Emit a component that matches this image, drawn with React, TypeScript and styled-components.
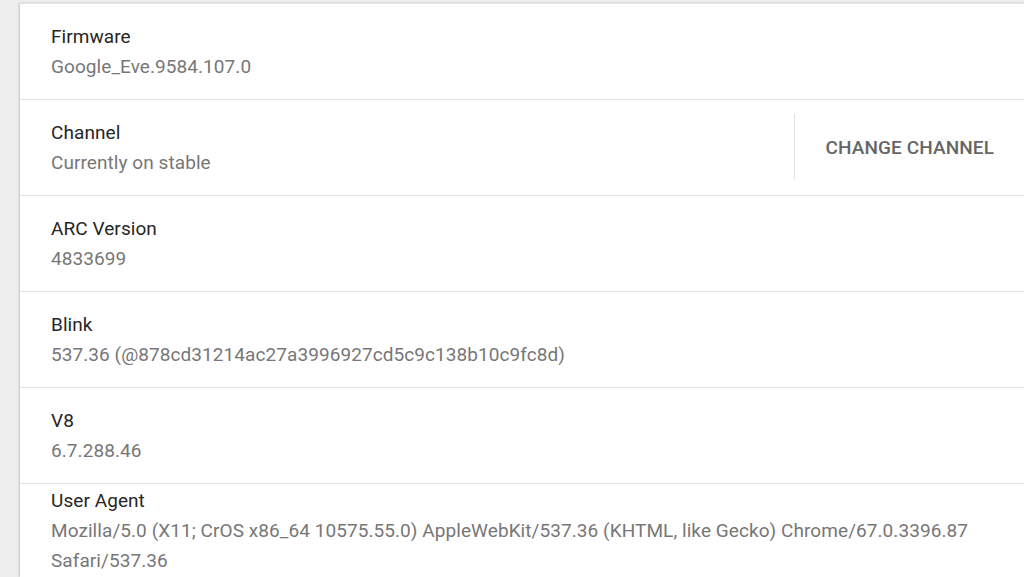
import styled, { createGlobalStyle } from "styled-components";

const GlobalStyle = createGlobalStyle`
    html, body {
        margin: 0;
        padding: 0;
        background: #eeeeee;
        font-family: Roboto, "Noto Sans", "Liberation Sans", sans-serif;
        overflow: hidden;
    }
`;

const Page = styled.div`
    display: flex;
    height: 577px;
    padding-left: 20px;
`;

const Card = styled.div`
    flex: 1;
    background: #ffffff;
    box-shadow: -1px 0 2px rgba(0, 0, 0, 0.18);
    border-top: 1px solid #e4e4e4;
    margin-top: 3px;
    display: flex;
    flex-direction: column;
`;

const Row = styled.div<{ compact?: boolean }>`
    display: flex;
    align-items: stretch;
    padding-left: 31px;
    border-bottom: ${({ compact }) => (compact ? "none" : "1px solid #e4e4e4")};
`;

const Text = styled.div<{ compact?: boolean }>`
    flex: 1;
    display: flex;
    flex-direction: column;
    justify-content: center;
    padding: ${({ compact }) => (compact ? "2px 0 0" : "18px 0 17px")};
`;

const Title = styled.div`
    font-size: 19px;
    line-height: 30px;
    color: #262626;
    letter-spacing: 0.07px;
`;

const Secondary = styled.div`
    font-size: 19px;
    line-height: 30px;
    color: #777777;
    letter-spacing: 0.07px;
    padding-right: 30px;
`;

const Separator = styled.div`
    width: 1px;
    margin: 14px 0 15px;
    background: #e4e4e4;
`;

const ActionButton = styled.button`
    align-self: center;
    border: none;
    background: none;
    font-family: inherit;
    font-size: 19px;
    font-weight: 500;
    color: #666666;
    letter-spacing: 0.1px;
    padding: 0 30px;
    height: 40px;
    cursor: pointer;
`;

const rows = [
    { title: "Firmware", value: "Google_Eve.9584.107.0" },
    { title: "Channel", value: "Currently on stable", action: "CHANGE CHANNEL" },
    { title: "ARC Version", value: "4833699" },
    { title: "Blink", value: "537.36 (@878cd31214ac27a3996927cd5c9c138b10c9fc8d)" },
    { title: "V8", value: "6.7.288.46" },
];

const App = () => {
    return (
        <>
            <GlobalStyle />
            <Page>
                <Card>
                    {rows.map((row) => (
                        <Row key={row.title}>
                            <Text>
                                <Title>{row.title}</Title>
                                <Secondary>{row.value}</Secondary>
                            </Text>
                            {row.action && (
                                <>
                                    <Separator />
                                    <ActionButton>{row.action}</ActionButton>
                                </>
                            )}
                        </Row>
                    ))}
                    <Row compact>
                        <Text compact>
                            <Title>User Agent</Title>
                            <Secondary>
                                Mozilla/5.0 (X11; CrOS x86_64 10575.55.0) AppleWebKit/537.36 (KHTML, like Gecko) Chrome/67.0.3396.87 Safari/537.36
                            </Secondary>
                        </Text>
                    </Row>
                </Card>
            </Page>
        </>
    );
};

export default App;
